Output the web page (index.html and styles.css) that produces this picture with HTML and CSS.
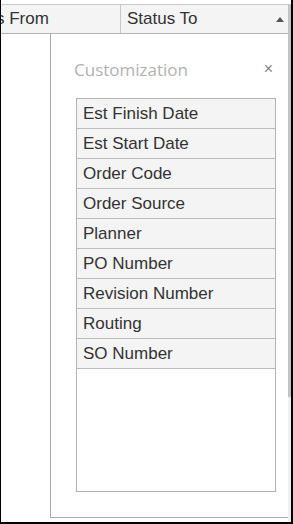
FILE: index.html
```html
<!DOCTYPE html>
<html>
<head>
<meta charset="utf-8">
<link rel="stylesheet" href="styles.css">
</head>
<body>
<div class="frame">
  <div class="main">
    <div class="header">
      <div class="col col-from"><span class="from-text">s From</span></div>
      <div class="col col-to">
        <span>Status To</span>
        <svg class="sort" width="8" height="5" viewBox="0 0 8 5"><path d="M0 5 L4 0 L8 5 Z" fill="#555"/></svg>
      </div>
    </div>
    <div class="body">
      <div class="panel">
        <div class="panel-head">
          <span class="title">Customization</span>
          <span class="close">&#215;</span>
        </div>
        <div class="list">
          <div class="item">Est Finish Date</div>
          <div class="item">Est Start Date</div>
          <div class="item">Order Code</div>
          <div class="item">Order Source</div>
          <div class="item">Planner</div>
          <div class="item">PO Number</div>
          <div class="item">Revision Number</div>
          <div class="item">Routing</div>
          <div class="item">SO Number</div>
        </div>
      </div>
    </div>
  </div>
  <div class="scrollbar"><div class="thumb"></div></div>
</div>
</body>
</html>
```

FILE: styles.css
```css
* { box-sizing: border-box; }
html, body { margin: 0; padding: 0; background: #fff; }
body { font-family: "Liberation Sans", Arial, sans-serif; }
.frame {
  width: 293px;
  height: 524px;
  display: flex;
  border-left: 1px solid #000;
  border-right: 2px solid #000;
  border-bottom: 2px solid #000;
  padding-top: 4px;
}
.main { flex: 1; display: flex; flex-direction: column; min-width: 0; }
.header {
  height: 30px;
  display: flex;
  background: #f4f4f4;
  border-top: 1px solid #c8c8c8;
  border-bottom: 1px solid #b4b4b4;
  font-size: 17px;
  color: #333;
}
.col { display: flex; align-items: center; }
.col-from {
  width: 120px;
  border-right: 1px solid #c8c8c8;
  overflow: hidden;
}
.from-text { margin-left: -5px; white-space: nowrap; }
.col-to { flex: 1; padding-left: 6px; justify-content: space-between; padding-right: 4px; }
.sort { display: block; margin-top: 1px; }
.body { flex: 1; display: flex; padding-left: 49px; padding-bottom: 4px; }
.panel {
  flex: 1;
  border-left: 1px solid #aaa;
  border-bottom: 1px solid #aaa;
  padding: 0 12px 25px 25px;
  display: flex;
  flex-direction: column;
}
.panel-head {
  height: 64px;
  display: flex;
  align-items: center;
  justify-content: space-between;
  padding-top: 6px;
}
.title {
  font-family: "Open Sans", sans-serif;
  font-size: 17px;
  color: #b2b2b2;
  margin-left: -2px;
}
.close { font-size: 16px; color: #888; margin-right: 3px; }
.list {
  flex: 1;
  width: 200px;
  border: 1px solid #b4b4b4;
}
.item {
  height: 30px;
  background: #f4f4f4;
  border-bottom: 1px solid #bdbdbd;
  padding-left: 6px;
  display: flex;
  align-items: center;
  font-size: 17px;
  color: #333;
}
.scrollbar { width: 3px; background: #efefef; display: flex; flex-direction: column; }
.thumb { height: 393px; background: #c4c4c4; }
```
